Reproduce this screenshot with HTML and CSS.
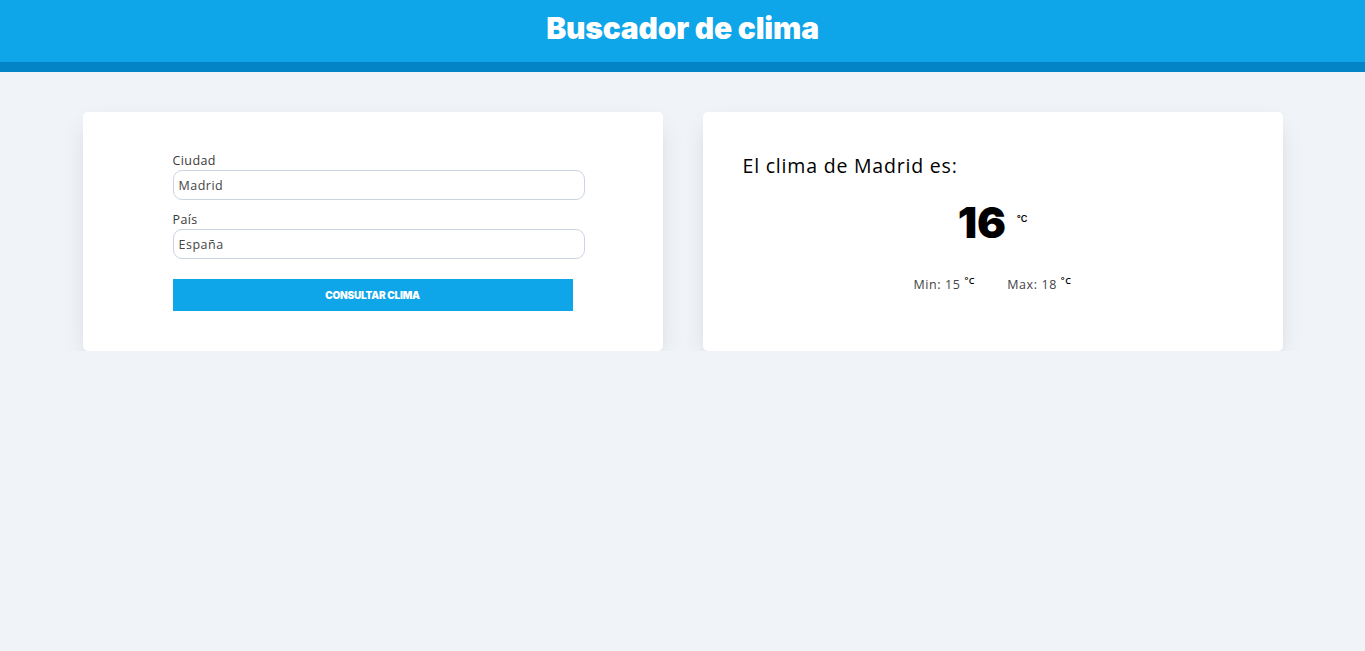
FILE: index.html
```html
<!DOCTYPE html>
<html lang="es">
<head>
<meta charset="utf-8">
<title>Buscador de clima</title>
<link rel="stylesheet" href="styles.css">
</head>
<body>
<header class="header">
  <h1 class="title">Buscador de clima</h1>
</header>
<main class="container">
  <section class="card">
    <form class="form">
      <div class="field">
        <label class="label" for="ciudad">Ciudad</label>
        <input class="input" id="ciudad" type="text" value="Madrid">
      </div>
      <div class="field">
        <label class="label" for="pais">País</label>
        <input class="input" id="pais" type="text" value="España">
      </div>
      <button class="button" type="button">Consultar clima</button>
    </form>
  </section>
  <section class="card card-result">
    <h2 class="result-title">El clima de Madrid es:</h2>
    <p class="temp">16 <sup class="unit">°C</sup></p>
    <div class="range">
      <p class="range-item">Min: 15 <sup class="unit-sm">°C</sup></p>
      <p class="range-item">Max: 18 <sup class="unit-sm">°C</sup></p>
    </div>
  </section>
</main>
</body>
</html>
```

FILE: styles.css
```css
* { box-sizing: border-box; }
body {
  margin: 0;
  background: #f0f4f8;
  font-family: "Open Sans", "Lato", sans-serif;
  color: #111;
}
.header {
  background: #0ea5e9;
  border-bottom: 10px solid #0284c7;
  height: 72px;
  display: flex;
  align-items: center;
  justify-content: center;
  padding-bottom: 6px;
}
.title {
  margin: 0;
  color: #fff;
  font-family: "Inter", sans-serif;
  font-weight: 900;
  font-size: 30px;
  letter-spacing: -0.2px;
  line-height: 1;
}
.container {
  width: 1200px;
  margin: 40px auto 0;
  display: grid;
  grid-template-columns: 1fr 1fr;
  gap: 40px;
}
.card {
  background: #fff;
  border-radius: 5px;
  box-shadow: 0 10px 25px -5px rgba(0,0,0,0.12), 0 8px 10px -6px rgba(0,0,0,0.08);
  padding: 40px 90px;
  height: 239px;
}
.form {
  width: 400px;
  display: flex;
  flex-direction: column;
}
.field {
  display: flex;
  flex-direction: column;
  margin-bottom: 11px;
}
.label {
  font-size: 12.5px;
  line-height: 18px;
  color: #3a3a3a;
  letter-spacing: 0.4px;
}
.input {
  box-sizing: content-box;
  width: 400px;
  height: 28px;
  padding: 0 5px;
  border: 1px solid #cbd5e1;
  border-radius: 9px;
  font-family: "Open Sans", sans-serif;
  font-size: 12.5px;
  letter-spacing: 0.5px;
  color: #444;
  outline: none;
}
.button {
  margin-top: 9px;
  width: 400px;
  height: 32px;
  border: 0;
  background: #0ea5e9;
  color: #fff;
  font-family: "Inter", sans-serif;
  font-weight: 900;
  font-size: 10px;
  text-transform: uppercase;
  letter-spacing: -0.2px;
}
.card-result {
  padding: 40px;
}
.result-title {
  margin: 0;
  font-size: 19.5px;
  line-height: 28px;
  font-weight: 400;
  letter-spacing: 0.8px;
  color: #000;
}
.temp {
  margin: 15px 0 0;
  text-align: center;
  font-family: "Inter", sans-serif;
  font-weight: 900;
  font-size: 43px;
  line-height: 48px;
  color: #000;
}
.unit {
  font-size: 9px;
  vertical-align: 16px;
  font-weight: 600;
  margin-left: 2px;
}
.range {
  margin-top: 28px;
  display: flex;
  justify-content: center;
  gap: 32px;
}
.range-item {
  margin: 0;
  font-size: 12.5px;
  color: #444;
  letter-spacing: 0.6px;
}
.unit-sm {
  font-size: 9px;
  color: #000;
  font-weight: 600;
}
```
